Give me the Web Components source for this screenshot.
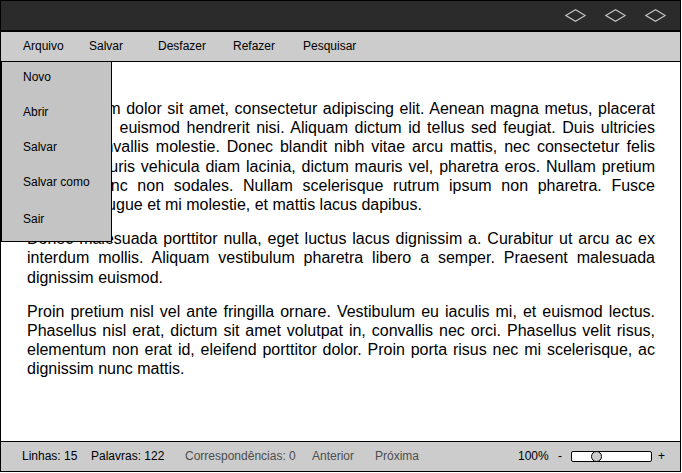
<!DOCTYPE html>
<html lang="pt">
<head>
<meta charset="utf-8">
<title>Editor</title>
<style>
body{margin:0;background:#fff;font-family:"Liberation Sans",Arial,sans-serif;color:#000}
</style>
</head>
<body>
<editor-window></editor-window>
<script>
const define=(name,html,init)=>customElements.define(name,class extends HTMLElement{
  constructor(){super();this.attachShadow({mode:'open'}).innerHTML=html;}
  connectedCallback(){if(init)init(this,this.shadowRoot);}
});

define('window-button',`<style>:host{display:block;width:22px;height:14px}svg{display:block}</style>
<svg width="22" height="14" viewBox="0 0 22 14"><path d="M.8 6.5 10.5.7 20.2 6.5 10.5 12.3Z" fill="none" stroke="#c4c4c4" stroke-width="1.1"/></svg>`);

define('title-bar',`<style>:host{display:flex;box-sizing:border-box;height:31px;background:#2b2b2b;border-bottom:2px solid #000;justify-content:flex-end;gap:18px;padding:8px 13px 0 0}</style>
<window-button></window-button><window-button></window-button><window-button></window-button>`);

define('bar-label',`<style>:host{display:block;font-size:12px;line-height:14px;white-space:nowrap}:host([muted]){color:#4d4d4d}</style><slot></slot>`);

define('menu-bar',`<style>:host{display:flex;box-sizing:border-box;height:30px;background:#ccc;border-bottom:1px solid #000;padding:7px 0 0 22px}
bar-label:nth-child(2){width:66px}bar-label:nth-child(3){width:69px}bar-label:nth-child(4){width:75px}bar-label:nth-child(5){width:70px}</style>
<bar-label>Arquivo</bar-label><bar-label>Salvar</bar-label><bar-label>Desfazer</bar-label><bar-label>Refazer</bar-label><bar-label>Pesquisar</bar-label>`);

define('drop-menu',`<style>:host{position:absolute;left:0;top:60px;box-sizing:border-box;width:111px;height:181px;background:#c4c4c4;border:1px solid #000;padding:8px 0 0 21px;display:flex;flex-direction:column;gap:21px}bar-label:last-child{margin-top:2px}</style>
<bar-label>Novo</bar-label><bar-label>Abrir</bar-label><bar-label>Salvar</bar-label><bar-label>Salvar como</bar-label><bar-label>Sair</bar-label>`);

define('text-line',`<style>:host{display:block;text-align:justify;text-align-last:justify;white-space:nowrap}:host([last]){text-align-last:left}
#lead{display:inline-block;height:19px;vertical-align:top}#lead[hidden]{display:none}</style><span id="lead" hidden></span><slot></slot>`,
(el,root)=>{const w=el.getAttribute('indent');if(w){const s=root.getElementById('lead');s.hidden=false;s.style.width=w+'px';}});

define('text-paragraph',`<style>:host{display:block}</style><slot></slot>`);

define('text-page',`<style>:host{display:flex;flex:1;flex-direction:column;gap:15px;padding:37px 25px 0 26px;font-size:16px;line-height:19.2px}</style>
<text-paragraph><text-line>Lorem ipsum dolor sit amet, consectetur adipiscing elit. Aenean magna metus, placerat</text-line>
<text-line indent="92.5">euismod hendrerit nisi. Aliquam dictum id tellus sed feugiat. Duis ultricies</text-line>
<text-line indent="60.5">convallis molestie. Donec blandit nibh vitae arcu mattis, nec consectetur felis</text-line>
<text-line indent="60">mauris vehicula diam lacinia, dictum mauris vel, pharetra eros. Nullam pretium</text-line>
<text-line indent="66">nunc non sodales. Nullam scelerisque rutrum ipsum non pharetra. Fusce</text-line>
<text-line last indent="71.2">augue et mi molestie, et mattis lacus dapibus.</text-line></text-paragraph>
<text-paragraph><text-line>Donec malesuada porttitor nulla, eget luctus lacus dignissim a. Curabitur ut arcu ac ex</text-line>
<text-line>interdum mollis. Aliquam vestibulum pharetra libero a semper. Praesent malesuada</text-line>
<text-line last>dignissim euismod.</text-line></text-paragraph>
<text-paragraph><text-line>Proin pretium nisl vel ante fringilla ornare. Vestibulum eu iaculis mi, et euismod lectus.</text-line>
<text-line>Phasellus nisl erat, dictum sit amet volutpat in, convallis nec orci. Phasellus velit risus,</text-line>
<text-line>elementum non erat id, eleifend porttitor dolor. Proin porta risus nec mi scelerisque, ac</text-line>
<text-line last>dignissim nunc mattis.</text-line></text-paragraph>`);

define('zoom-slider',`<style>:host{display:block}svg{display:block}</style>
<svg width="82" height="12" viewBox="0 0 82 12"><rect x=".5" y=".5" width="80" height="10" rx="1.6" fill="#fff" stroke="#000"/><circle cx="25.5" cy="5.5" r="5" fill="#ccc" stroke="#000"/></svg>`);

define('status-bar',`<style>:host{display:flex;box-sizing:border-box;height:30px;background:#ccc;border-top:1px solid #000;padding:7px 0 0 21px}
.a{width:69px}.b{width:94px}.c{width:127px}.d{width:63px}.e{width:143px}.f{width:40px}.g{width:13px}zoom-slider{margin-top:2px;width:87px}</style>
<bar-label class="a">Linhas: 15</bar-label><bar-label class="b">Palavras: 122</bar-label><bar-label class="c" muted>Correspondências: 0</bar-label><bar-label class="d" muted>Anterior</bar-label><bar-label class="e" muted>Próxima</bar-label><bar-label class="f">100%</bar-label><bar-label class="g">-</bar-label><zoom-slider></zoom-slider><bar-label>+</bar-label>`);

define('editor-window',`<style>:host{position:relative;display:flex;flex-direction:column;box-sizing:border-box;width:681px;height:472px;border:1px solid #000;background:#fff;overflow:hidden}</style>
<title-bar></title-bar><menu-bar></menu-bar><text-page></text-page><status-bar></status-bar><drop-menu></drop-menu>`);
</script>
</body>
</html>
